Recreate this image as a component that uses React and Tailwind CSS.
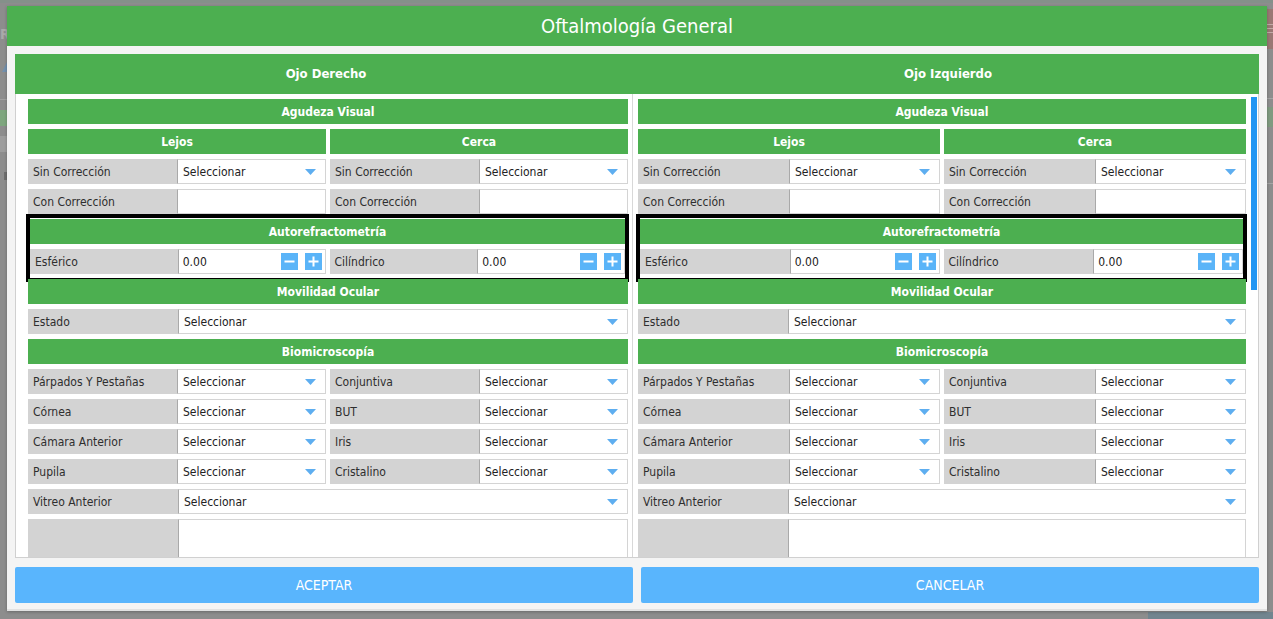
import React from "react";

const Arrow = () => (
  <svg width="11" height="6" viewBox="0 0 11 6" className="shrink-0">
    <path d="M0 0H11L5.5 6Z" fill="#5eaef0" />
  </svg>
);

function GreenBar({ children }) {
  return (
    <div className="h-[25px] shrink-0 bg-[#4caf50] flex items-center justify-center text-white font-bold text-[12px]">
      {children}
    </div>
  );
}

function Label({ children, className = "" }) {
  return (
    <div className={`bg-[#d3d3d3] flex items-center pl-[5px] pt-[1px] text-[12px] text-[#2e2e2e] whitespace-nowrap overflow-hidden ${className}`}>
      {children}
    </div>
  );
}

function SelectBox({ className = "" }) {
  return (
    <div className={`bg-white border border-[#d4d4d4] border-l-[#a9a9a9] flex items-center justify-between pl-[5px] pr-[9px] pt-[1px] text-[12px] text-[#222] ${className}`}>
      <span>Seleccionar</span>
      <Arrow />
    </div>
  );
}

function TextBox({ className = "" }) {
  return <div className={`bg-white border border-[#d4d4d4] border-l-[#a9a9a9] ${className}`} />;
}

function SmallBtn({ plus }) {
  return (
    <div className="w-[17px] h-[17px] bg-[#5ab4f8] flex items-center justify-center shrink-0">
      <svg width="11" height="11" viewBox="0 0 11 11">
        <rect x="0.5" y="4.5" width="10" height="2" fill="#fff" />
        {plus && <rect x="4.5" y="0.5" width="2" height="10" fill="#fff" />}
      </svg>
    </div>
  );
}

function NumberBox() {
  return (
    <div className="bg-white border border-[#d4d4d4] border-l-[#a9a9a9] flex items-center pl-[4px] pr-[3px] text-[12px] text-[#222]">
      <span className="flex-1 pt-[1px]">0.00</span>
      <SmallBtn />
      <div className="w-[7px]" />
      <SmallBtn plus />
    </div>
  );
}

function Cell({ label, kind }) {
  return (
    <div className="grid grid-cols-2 h-[25px]">
      <Label>{label}</Label>
      {kind === "select" && <SelectBox />}
      {kind === "text" && <TextBox />}
      {kind === "number" && <NumberBox />}
    </div>
  );
}

function Pair({ children }) {
  return <div className="grid grid-cols-2 gap-[4px] h-[25px] shrink-0">{children}</div>;
}

function Full({ label }) {
  return (
    <div className="flex h-[25px] shrink-0">
      <Label className="w-[150px] shrink-0">{label}</Label>
      <SelectBox className="flex-1" />
    </div>
  );
}

function EyeColumn() {
  return (
    <div className="flex flex-col gap-[5px]">
      <GreenBar>Agudeza Visual</GreenBar>
      <div className="grid grid-cols-2 gap-[4px]">
        <GreenBar>Lejos</GreenBar>
        <GreenBar>Cerca</GreenBar>
      </div>
      <Pair>
        <Cell label="Sin Corrección" kind="select" />
        <Cell label="Sin Corrección" kind="select" />
      </Pair>
      <Pair>
        <Cell label="Con Corrección" kind="text" />
        <Cell label="Con Corrección" kind="text" />
      </Pair>
      <div className="-mt-[1px] pt-[1px] -mb-[4px] pb-[4px] ml-[2px] mr-[3px] outline-4 outline-solid outline-black flex flex-col gap-[5px]">
        <GreenBar>Autorefractometría</GreenBar>
        <Pair>
          <Cell label="Esférico" kind="number" />
          <Cell label="Cilíndrico" kind="number" />
        </Pair>
      </div>
      <GreenBar>Movilidad Ocular</GreenBar>
      <Full label="Estado" />
      <GreenBar>Biomicroscopía</GreenBar>
      <Pair>
        <Cell label="Párpados Y Pestañas" kind="select" />
        <Cell label="Conjuntiva" kind="select" />
      </Pair>
      <Pair>
        <Cell label="Córnea" kind="select" />
        <Cell label="BUT" kind="select" />
      </Pair>
      <Pair>
        <Cell label="Cámara Anterior" kind="select" />
        <Cell label="Iris" kind="select" />
      </Pair>
      <Pair>
        <Cell label="Pupila" kind="select" />
        <Cell label="Cristalino" kind="select" />
      </Pair>
      <Full label="Vitreo Anterior" />
      <div className="flex h-[70px] shrink-0">
        <Label className="w-[150px] shrink-0" />
        <TextBox className="flex-1" />
      </div>
    </div>
  );
}

export default function App() {
  return (
    <div className="relative w-[1273px] h-[619px] overflow-hidden bg-[#8d8d8d] font-['DejaVu_Sans_Condensed','DejaVu_Sans',sans-serif]">
      {/* faint background behind overlay */}
      <div className="absolute left-0 top-0 w-full h-[3px] bg-[#85908a]" />
      <div className="absolute left-0 top-[24px] text-[14px] text-[#a9a9a9] font-bold">R</div>
      <div className="absolute left-[2px] top-[60px] w-0 h-0 border-l-[6px] border-r-[6px] border-b-[12px] border-l-transparent border-r-transparent border-b-[#7390ad]" />
      <div className="absolute left-0 top-[99px] w-[8px] h-[1px] bg-[#a0a0a0]" />
      <div className="absolute left-0 top-[110px] w-[8px] h-[16px] bg-[#7ea67e]" />
      <div className="absolute left-0 top-[136px] w-[8px] h-[16px] bg-[#9d9d9d]" />
      <div className="absolute left-[4px] top-[172px] w-[3px] h-[8px] bg-[#6f6f6f]" />
      <div className="absolute right-0 top-[9px] w-[7px] h-[40px] bg-[#9a7874]" />
      <div className="absolute right-0 top-[24px] w-[7px] h-[1px] bg-[#c2aaa7]" />
      <div className="absolute right-0 top-[28px] w-[7px] h-[1px] bg-[#c2aaa7]" />
      <div className="absolute right-0 top-[32px] w-[7px] h-[1px] bg-[#c2aaa7]" />
      <div className="absolute right-0 top-[98px] w-[7px] h-[1px] bg-[#a5a5a5]" />
      <div className="absolute right-0 top-[107px] w-[7px] h-[20px] bg-[#7f9a80]" />
      <div className="absolute right-0 top-[183px] w-[7px] h-[1px] bg-[#a5a5a5]" />
      <div className="absolute left-[1148px] top-[612px] w-[125px] h-[7px] bg-[#72858f]" />

      {/* modal */}
      <div className="absolute left-[7px] top-[6px] w-[1260px] flex flex-col bg-[#f4f4f4] border-b-[2px] border-[#e2e2e2] shadow-[0_1px_3px_rgba(0,0,0,0.25)]">
        <div className="h-[40px] bg-[#4caf50] flex items-center justify-center text-white text-[20px]">
          Oftalmología General
        </div>
        <div className="px-[8px] pt-[8px] pb-[6px] flex flex-col">
          <div className="h-[40px] bg-[#4caf50] flex text-white font-bold text-[13px]">
            <div className="flex-1 flex items-center justify-center">Ojo Derecho</div>
            <div className="flex-1 flex items-center justify-center">Ojo Izquierdo</div>
          </div>
          <div className="h-[464px] bg-white border-x border-b border-[#d0d0d0] overflow-hidden flex">
            <div className="w-[617px] shrink-0 pl-[12px] pr-[4px] pt-[5px] border-r border-[#d8d8d8]">
              <EyeColumn />
            </div>
            <div className="w-[617px] shrink-0 pl-[5px] pr-[4px] pt-[5px]">
              <EyeColumn />
            </div>
            <div className="w-[8px] shrink-0 pt-[3px] pl-[1px]">
              <div className="w-[6px] h-[193px] bg-[#2196f3]" />
            </div>
          </div>
          <div className="mt-[9px] flex gap-[8px]">
            <div className="flex-1 h-[36px] bg-[#59b5fd] rounded-[2px] flex items-center justify-center text-white text-[14px]">
              ACEPTAR
            </div>
            <div className="flex-1 h-[36px] bg-[#59b5fd] rounded-[2px] flex items-center justify-center text-white text-[14px]">
              CANCELAR
            </div>
          </div>
        </div>
      </div>
    </div>
  );
}
